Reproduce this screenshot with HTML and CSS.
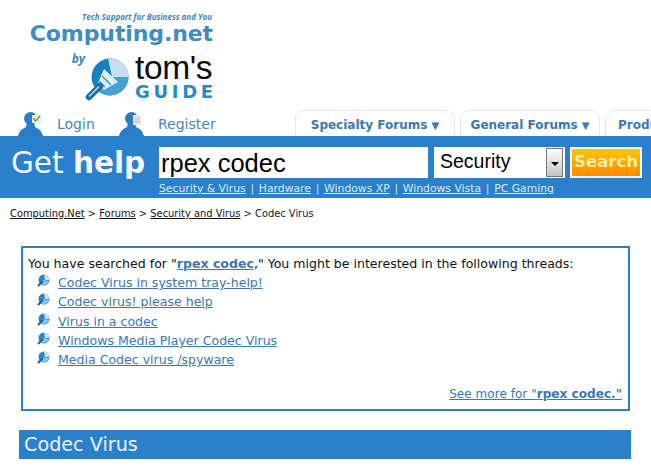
FILE: index.html
```html
<!DOCTYPE html>
<html lang="en">
<head>
<meta charset="utf-8">
<title>Codec Virus - Computing.Net</title>
<link rel="stylesheet" href="styles.css">
</head>
<body>
<svg class="defs" width="0" height="0" aria-hidden="true">
  <defs>
    <symbol id="person" viewBox="0 0 26 24">
      <ellipse cx="12.500" cy="6.500" rx="6.500" ry="6.500" fill="#2a7cc4"/>
      <path d="M9 10h7l1 5c4 2 6 3 8 9H0c2-6 4-7 8-9z" fill="#2a7cc4"/>
    </symbol>
    <symbol id="bullet" viewBox="0 0 13 13">
      <circle cx="7" cy="6" r="5.5" fill="#2b86c2"/>
      <path d="M7 .5a5.500 5.500 0 0 1 5.500 5.500H8z" fill="#c7e1ee"/>
      <path d="M6 6l6 1c-1 3-3 4-5 4-2 0-3-.6-3.500-1.500z" fill="#8dc0de"/>
      <path d="M1 12l5-5" stroke="#17629e" stroke-width="2" fill="none"/>
    </symbol>
  </defs>
</svg>
<header class="masthead">
  <div class="logo">
    <div class="tagline">Tech Support for Business and You</div>
    <div class="brand">Computing.net</div>
    <div class="byline">
      <span class="by">by</span>
      <svg class="lens" width="46" height="46" viewBox="0 0 46 46" aria-hidden="true">
        <circle cx="26" cy="21" r="18.500" fill="#1a80bd"/>
        <path d="M24 2.600A18.500 18.500 0 0 1 44.500 21H28z" fill="#c4dfee"/>
        <path d="M28 21h16.500C43.500 31 35.500 39.500 26 39.500c-5 0-9-2-12-5z" fill="#45a2d4"/>
        <path d="M20 13l14 13-14 8-6-7z" fill="#dcecf5"/>
        <path d="M18 20l9 9M15 25l6 6" stroke="#2f8cc4" stroke-width="1.200"/>
        <path d="M5 41l11-11" stroke="#1d6ea8" stroke-width="6.500" stroke-linecap="round"/>
        <path d="M5 40.500l10-10" stroke="#bfdcee" stroke-width="1.500"/>
      </svg>
      <div class="toms">
        <div class="toms-name">tom's</div>
        <div class="toms-guide">GUIDE</div>
      </div>
    </div>
  </div>
  <nav class="navrow">
    <a class="account account-login" href="#">
      <span class="person"><svg width="26" height="24"><use href="#person"/></svg>
        <svg class="badge" width="9" height="8" viewBox="0 0 9 8"><rect width="9" height="8" fill="#e6ecdf"/><path d="M1.500 3.500l2 2.500L8 1" stroke="#6c9e3a" stroke-width="1.400" fill="none"/></svg></span>
      <span>Login</span>
    </a>
    <a class="account account-register" href="#">
      <span class="person"><svg width="26" height="24"><use href="#person"/></svg>
        <svg class="badge" width="8" height="10" viewBox="0 0 8 10"><rect width="8" height="10" fill="#e6ebf1"/><path d="M1 3h6M1 5h6M1 7h6" stroke="#b6c1cd"/></svg></span>
      <span>Register</span>
    </a>
    <div class="tabs">
      <a class="tab tab-specialty" href="#">Specialty Forums <span class="caret">▼</span></a>
      <a class="tab tab-general" href="#">General Forums <span class="caret">▼</span></a>
      <a class="tab tab-products" href="#">Products <span class="caret">▼</span></a>
    </div>
  </nav>
</header>
<section class="band">
  <div class="gethelp">Get <b>help</b></div>
  <div class="searchcol">
    <form class="searchform">
      <input class="query" type="text" value="rpex codec" aria-label="Search">
      <span class="selectwrap">
        <select class="category" aria-label="Forum"><option>Security</option></select>
        <span class="selectarrow"></span>
      </span>
      <button class="go" type="button">Search</button>
    </form>
    <div class="quicklinks">
      <a href="#">Security &amp; Virus</a><span>|</span><a href="#">Hardware</a><span>|</span><a href="#">Windows XP</a><span>|</span><a href="#">Windows Vista</a><span>|</span><a href="#">PC Gaming</a>
    </div>
  </div>
</section>
<div class="crumbs"><a href="#">Computing.Net</a> &gt; <a href="#">Forums</a> &gt; <a href="#">Security and Virus</a> &gt; Codec Virus</div>
<section class="results">
  <p class="intro">You have searched for "<a href="#"><b>rpex codec</b></a>," You might be interested in the following threads:</p>
  <ul class="threads">
    <li><svg width="13" height="13"><use href="#bullet"/></svg><a href="#">Codec Virus in system tray-help!</a></li>
    <li><svg width="13" height="13"><use href="#bullet"/></svg><a href="#">Codec virus! please help</a></li>
    <li><svg width="13" height="13"><use href="#bullet"/></svg><a href="#">Virus in a codec</a></li>
    <li><svg width="13" height="13"><use href="#bullet"/></svg><a href="#">Windows Media Player Codec Virus</a></li>
    <li><svg width="13" height="13"><use href="#bullet"/></svg><a href="#">Media Codec virus /spyware</a></li>
  </ul>
  <div class="seemore"><a href="#">See more for "<b>rpex codec."</b></a></div>
</section>
<h1 class="title">Codec Virus</h1>
</body>
</html>
```
FILE: styles.css
```css
html, body {
  margin: 0;
  padding: 0;
  background: #fff;
  overflow: hidden;
}
body {
  width: 651px;
  height: 474px;
  font-family: "DejaVu Sans", Verdana, sans-serif;
  color: #222;
}
.defs { display: block; height: 0; }
a { color: #3a78b6; }

.masthead {
  height: 136px;
  display: flex;
  flex-direction: column;
  justify-content: flex-end;
}
.logo {
  width: 214px;
  display: flex;
  flex-direction: column;
  align-items: flex-end;
  height: 102px;
  padding-top: 10px;
  box-sizing: border-box;
}
.tagline {
  font: italic bold 8px/14px "Open Sans", sans-serif;
  color: #3f86c0;
  margin-right: 2px;
}
.brand {
  font: bold 22px/24px "DejaVu Sans", sans-serif;
  color: #3f8cc4;
  margin-top: -2px;
  margin-right: 1px;
  letter-spacing: -0.100px;
}
.byline {
  display: flex;
  align-items: flex-start;
  margin-top: 6px;
}
.by {
  font: italic bold 12px/14px "Open Sans", sans-serif;
  color: #3f86c0;
  margin-top: 0;
  margin-right: -1px;
}
.lens { margin: 4px 5px 0 0; }
.toms { width: 79px; }
.toms-name {
  font: 33.500px/31px "Liberation Sans", sans-serif;
  color: #0a0a0a;
  letter-spacing: -0.400px;
}
.toms-guide {
  font: bold 18px/18px "DejaVu Sans", sans-serif;
  color: #2b8bc0;
  letter-spacing: 3.700px;
  white-space: nowrap;
}

.navrow {
  display: flex;
  align-items: flex-end;
  height: 34px;
  font-size: 14px;
  overflow: hidden;
}
.account {
  display: flex;
  flex: none;
  align-items: flex-end;
  text-decoration: none;
  color: #4a86bd;
  height: 26px;
}
.account-login { margin-left: 18px; width: 101px; }
.account-register { width: 176px; }
.account > span:last-child { line-height: 24px; }
.account-login > span:last-child { margin-left: 13px; }
.account-register > span:last-child { margin-left: 13px; }
.person { position: relative; display: block; width: 26px; height: 24px; }
.person svg { display: block; }
.person .badge { position: absolute; left: 14px; top: 3px; }
.tabs {
  display: flex;
  gap: 5px;
  flex: none;
}
.tab {
  box-sizing: border-box;
  height: 26px;
  border: 1px solid #e6e6e6;
  border-bottom: 0;
  border-radius: 9px 9px 0 0;
  font-weight: bold;
  font-size: 12px;
  line-height: 28px;
  color: #3a78b6;
  text-decoration: none;
  text-align: center;
  white-space: nowrap;
}
.tab-specialty { width: 160px; }
.tab-general { width: 140px; }
.tab-products { width: 120px; text-align: left; padding-left: 12px; }
.caret { font-size: 10px; }

.band {
  height: 62px;
  background: #2b80cc;
  display: flex;
  color: #fff;
}
.gethelp {
  font-size: 29.500px;
  line-height: 54px;
  margin-left: 11px;
  width: 148px;
  flex: none;
  white-space: nowrap;
  color: #f2f8fd;
}
.searchcol { display: flex; flex-direction: column; padding-top: 11px; }
.searchform { display: flex; height: 31px; margin: 0; }
.query {
  box-sizing: border-box;
  width: 269px;
  height: 31px;
  border: 0;
  padding: 2px 0 0 2px;
  margin: 0;
  font: 25.500px "Liberation Sans", sans-serif;
  color: #000;
  background: #fff;
  outline: none;
}
.selectwrap { position: relative; margin-left: 6px; width: 131px; height: 31px; display: block; }
.category {
  appearance: none;
  width: 100%;
  height: 31px;
  border: 0;
  border-radius: 0;
  padding: 0 0 3px 6px;
  margin: 0;
  font: 19.500px "Liberation Sans", sans-serif;
  color: #000;
  background: #fff;
}
.selectarrow {
  position: absolute;
  right: 2px;
  top: 1px;
  width: 17px;
  height: 29px;
  box-sizing: border-box;
  border: 1px solid #777;
  background: linear-gradient(#fff, #c4c4c4);
}
.selectarrow::after {
  content: "";
  position: absolute;
  left: 4px;
  top: 13px;
  border: 4px solid transparent;
  border-top: 4px solid #000;
  border-bottom: 0;
}
.go {
  box-sizing: border-box;
  margin-left: 5px;
  width: 72px;
  height: 31px;
  border: 2px solid #fff;
  padding: 0 0 2px;
  background: linear-gradient(#ffc400, #ff8a00);
  color: #ffedb0;
  font: bold 16.500px "DejaVu Sans", sans-serif;
}
.quicklinks {
  margin-top: 3px;
  font-size: 10.800px;
  line-height: 15px;
  white-space: nowrap;
  color: #cfe3f5;
}
.quicklinks a { color: #d9e9f7; }
.quicklinks span { margin: 0 4.750px; }

.crumbs {
  margin: 9px 0 0 10px;
  font-size: 9.900px;
  line-height: 13px;
  color: #222;
  white-space: nowrap;
}
.crumbs a { color: #111; }

.results {
  box-sizing: border-box;
  width: 609px;
  height: 165px;
  margin: 26px 0 0 21px;
  border: 2px solid #2f7fc4;
  padding: 7px 6px 0 5px;
  display: flex;
  flex-direction: column;
  font-size: 12.550px;
}
.intro { margin: 0; line-height: 17px; white-space: nowrap; color: #111; }
.threads { list-style: none; margin: 0; padding: 1px 0 0 9px; }
.threads li { display: flex; align-items: flex-start; height: 19.300px; line-height: 19px; }
.threads svg { margin: 1px 8px 0 0; flex: none; }
.seemore { margin-top: auto; text-align: right; line-height: 16px; padding-bottom: 7px; font-size: 12.100px; }

.title {
  box-sizing: border-box;
  width: 612px;
  height: 29px;
  margin: 19px 0 0 19px;
  padding-left: 5px;
  background: #2b80cc;
  color: #eaf3fb;
  font-size: 19.200px;
  font-weight: normal;
  line-height: 29px;
}
```
